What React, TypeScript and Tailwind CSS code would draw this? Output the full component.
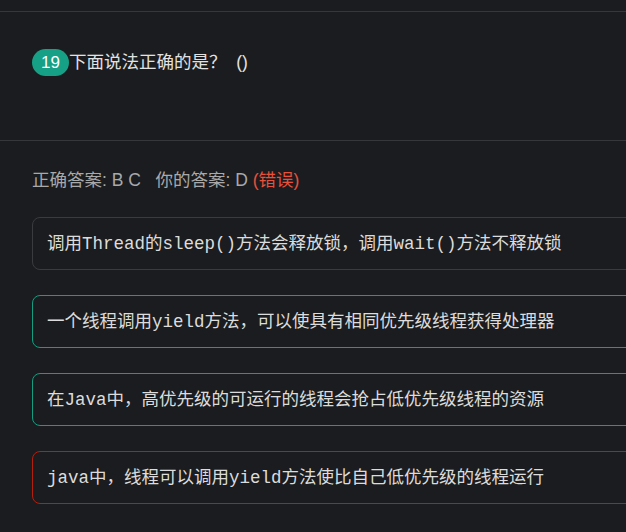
import React from 'react';

type Opt = { text: React.ReactNode; state: 'none' | 'right' | 'wrong' };

const mono = (s: string) => <span className="font-['Liberation_Mono',monospace]">{s}</span>;

const options: Opt[] = [
    { text: <>调用{mono('Thread')}的{mono('sleep()')}方法会释放锁，调用{mono('wait()')}方法不释放锁</>, state: 'none' },
    { text: <>一个线程调用{mono('yield')}方法，可以使具有相同优先级线程获得处理器</>, state: 'right' },
    { text: <>在{mono('Java')}中，高优先级的可运行的线程会抢占低优先级线程的资源</>, state: 'right' },
    { text: <>{mono('java')}中，线程可以调用{mono('yield')}方法使比自己低优先级的线程运行</>, state: 'wrong' },
];

const borderFor = {
    none: 'border-[#3a3b3f]',
    right: 'border-[#169c7f]',
    wrong: 'border-[#b3200c]',
};

export default function App() {
    return (
        <div className="h-[532px] w-[626px] overflow-hidden bg-[#1b1c1f] pt-[11px] font-['Liberation_Sans','Noto_Sans_CJK_SC',sans-serif]">
            <div className="w-[720px]">
                <div className="h-[129px] border-t border-[#36373b] pl-8 pt-[37px]">
                    <div className="flex items-center">
                        <span className="flex h-[27px] w-[37px] items-center justify-center rounded-full bg-[#16a085] text-[17px] text-white">
                            19
                        </span>
                        <span className="text-[17.5px] text-[#e2e2e2]">下面说法正确的是？&nbsp;&nbsp;()</span>
                    </div>
                </div>
                <div className="border-t border-[#36373b] pl-8 pt-[26px]">
                    <div className="text-[17.5px] leading-[26px] text-[#a9a9a9]">
                        正确答案: B C&nbsp;&nbsp;&nbsp;你的答案: D <span className="text-[#e8503a]">(错误)</span>
                    </div>
                    <div className="mt-[24px] flex flex-col gap-[25px]">
                        {options.map((o, i) => (
                            <div
                                key={i}
                                className={`flex h-[53px] items-center rounded-lg border px-[14px] text-[17.5px] text-[#dcdcdc] font-['Liberation_Mono','Noto_Sans_CJK_SC',monospace] ${borderFor[o.state]}`}
                            >
                                <span className="font-['Noto_Sans_CJK_SC',sans-serif]">{o.text}</span>
                            </div>
                        ))}
                    </div>
                </div>
            </div>
        </div>
    );
}
